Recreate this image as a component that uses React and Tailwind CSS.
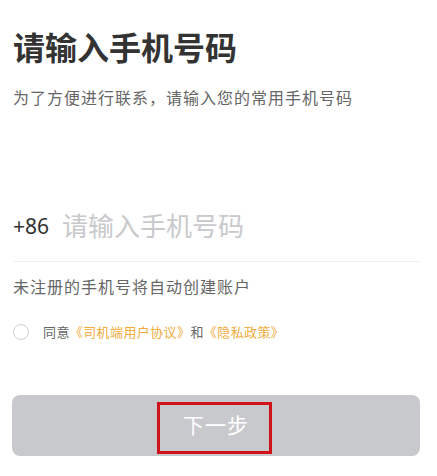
export default function App() {
  const font = { fontFamily: '"Noto Sans", "Noto Sans CJK SC", sans-serif' };
  return (
    <div className="w-[437px] h-[476px] bg-white overflow-hidden" style={font}>
      <div className="pl-[13px] pr-[17px] pt-[28px]">
        <h1 className="text-[32px] leading-[40px] font-bold text-[#333333]">请输入手机号码</h1>
        <p className="mt-[18px] text-[16px] leading-[24px] tracking-[1px] text-[#666666]">
          为了方便进行联系，请输入您的常用手机号码
        </p>

        <div className="mt-[98px] flex items-center pb-[17px] border-b border-[#f0f0f0]">
          <span className="text-[21px] leading-[36px] text-[#333333]">+86</span>
          <span className="ml-[13px] text-[26px] leading-[36px] text-[#c8c9cc]">请输入手机号码</span>
        </div>

        <p className="mt-[13px] text-[16px] leading-[24px] tracking-[1px] text-[#666666]">
          未注册的手机号将自动创建账户
        </p>

        <div className="mt-[23px] flex items-center">
          <span className="w-[16px] h-[16px] rounded-full border border-[#cfcfcf] shrink-0" />
          <span className="ml-[14px] text-[13px] leading-[20px] tracking-[0.4px] text-[#666666]">
            同意<span className="text-[#f0ad3c]">《司机端用户协议》</span>和<span className="text-[#f0ad3c]">《隐私政策》</span>
          </span>
        </div>

        <div className="relative mt-[53px] -ml-px h-[61px] rounded-lg bg-[#c8c9cc] flex items-center justify-center">
          <span className="text-[21px] tracking-[1px] text-white">下一步</span>
          <div className="absolute left-[145px] top-[7px] w-[115px] h-[52px] border-[3px] border-[#d0121b]" />
        </div>
      </div>
    </div>
  );
}
